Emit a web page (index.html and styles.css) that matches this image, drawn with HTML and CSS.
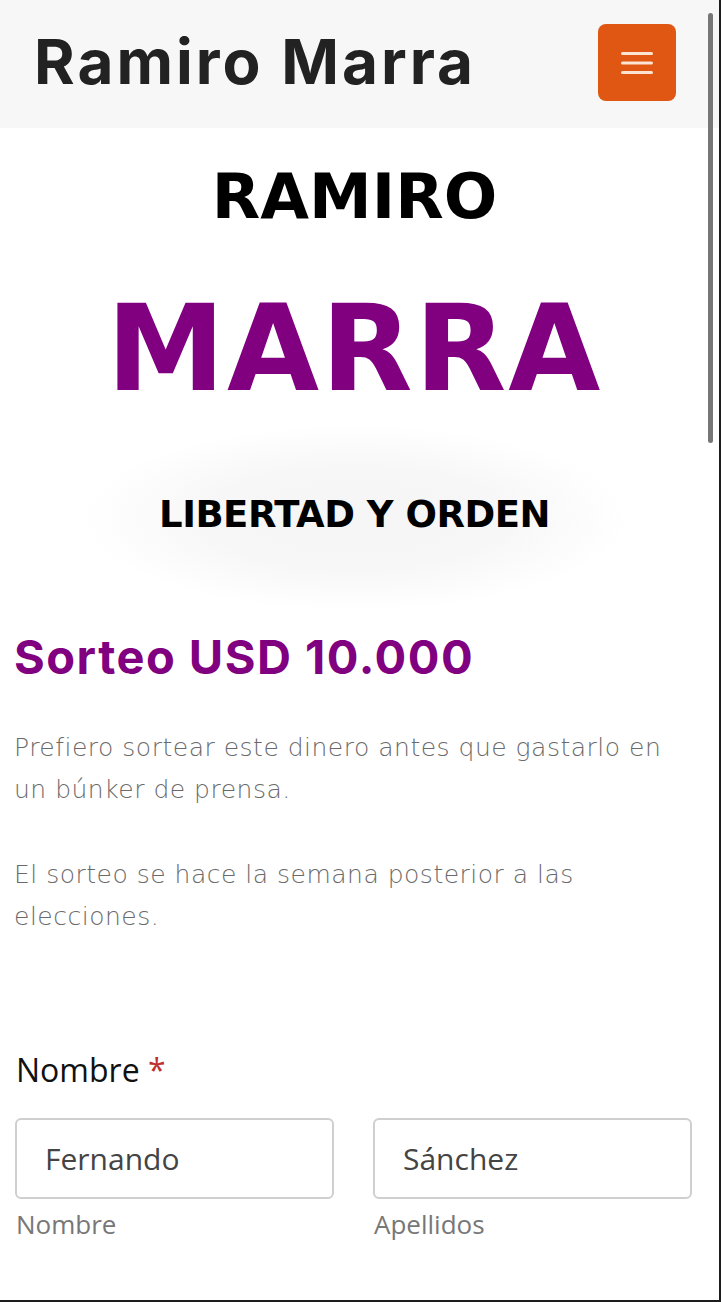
FILE: index.html
```html
<!DOCTYPE html>
<html lang="es">
<head>
<meta charset="utf-8">
<title>Ramiro Marra</title>
<link rel="stylesheet" href="styles.css">
</head>
<body>
<div class="page">
  <header class="site-header">
    <div class="brand">Ramiro Marra</div>
    <button class="menu-btn" aria-label="Menú">
      <svg width="32" height="22" viewBox="0 0 32 22"><rect x="0" y="0" width="32" height="3" rx="1.5" fill="#fbe4d2"/><rect x="0" y="9.5" width="32" height="3" rx="1.5" fill="#fbe4d2"/><rect x="0" y="19" width="32" height="3" rx="1.5" fill="#fbe4d2"/></svg>
    </button>
  </header>

  <section class="hero">
    <h1 class="hero-first">RAMIRO</h1>
    <h1 class="hero-last">MARRA</h1>
    <div class="motto-wrap">
      <h2 class="motto">LIBERTAD Y ORDEN</h2>
    </div>
  </section>

  <main class="content">
    <h2 class="raffle-title">Sorteo USD 10.000</h2>
    <p class="lead">Prefiero sortear este dinero antes que gastarlo en un búnker de prensa.</p>
    <p class="lead">El sorteo se hace la semana posterior a las elecciones.</p>

    <form class="form">
      <div class="field-label">Nombre <span class="req">*</span></div>
      <div class="name-row">
        <div class="name-col">
          <div class="input">Fernando</div>
          <div class="sublabel">Nombre</div>
        </div>
        <div class="name-col">
          <div class="input">Sánchez</div>
          <div class="sublabel">Apellidos</div>
        </div>
      </div>
    </form>
  </main>

  <div class="scrollbar"></div>
</div>
</body>
</html>
```

FILE: styles.css
```css
html, body {
  margin: 0;
  padding: 0;
  background: #ffffff;
}

.page {
  position: relative;
  width: 721px;
  height: 1302px;
  box-sizing: border-box;
  border-right: 2px solid #1c1c1c;
  border-bottom: 2px solid #1c1c1c;
  overflow: hidden;
  font-family: "Inter", "Liberation Sans", sans-serif;
}

.site-header {
  height: 128px;
  background: #f7f7f7;
  display: flex;
  justify-content: space-between;
  align-items: flex-start;
  padding: 0 43px 0 34px;
}

.brand {
  font-family: "Inter", sans-serif;
  font-weight: 700;
  font-size: 62px;
  line-height: 1;
  color: #222222;
  margin-top: 31px;
  letter-spacing: 3px;
}

.menu-btn {
  margin-top: 24px;
  width: 78px;
  height: 77px;
  border: none;
  border-radius: 8px;
  background: #df5713;
  display: flex;
  align-items: center;
  justify-content: center;
  padding: 0;
}

.menu-btn svg {
  display: block;
}

.hero {
  text-align: center;
  padding-right: 10px;
  font-family: "DejaVu Sans", sans-serif;
}

.hero-first {
  margin: 0;
  padding-top: 37px;
  font-weight: 700;
  font-size: 63px;
  line-height: 1;
  color: #000000;
}

.hero-last {
  margin: 0;
  margin-top: 62px;
  font-weight: 700;
  font-size: 119px;
  letter-spacing: 2px;
  line-height: 1;
  color: #800080;
}

.motto-wrap {
  margin: 16px auto 0;
  width: 544px;
  height: 186px;
  box-sizing: border-box;
  padding-bottom: 8px;
  display: flex;
  align-items: center;
  justify-content: center;
  background: radial-gradient(closest-side, #f5f5f5 0%, #f7f7f7 55%, #ffffff 100%);
}

.motto {
  margin: 0;
  font-weight: 700;
  font-size: 37px;
  letter-spacing: -0.5px;
  line-height: 1;
  color: #000000;
}

.content {
  padding: 0 14px;
}

.raffle-title {
  margin: 22px 0 0;
  font-weight: 700;
  font-size: 47px;
  letter-spacing: 1.5px;
  line-height: 1;
  color: #800080;
}

.lead {
  margin: 47px 0 0;
  max-width: 670px;
  font-family: "DejaVu Sans", sans-serif;
  font-weight: 300;
  font-size: 25px;
  letter-spacing: 0.5px;
  line-height: 42px;
  color: #6a6a6a;
}

.lead + .lead {
  margin-top: 43px;
}

.form {
  margin-top: 116px;
  font-family: "Open Sans", "Noto Sans", sans-serif;
}

.field-label {
  font-size: 32px;
  line-height: 1;
  color: #111111;
  padding-left: 2px;
}

.req {
  color: #c0302e;
}

.name-row {
  margin-top: 32px;
  display: flex;
  gap: 39px;
  padding-left: 1px;
}

.name-col {
  width: 319px;
}

.input {
  height: 81px;
  box-sizing: border-box;
  border: 2px solid #cfcfcf;
  border-radius: 6px;
  padding: 0 28px;
  display: flex;
  align-items: center;
  font-size: 30px;
  color: #444444;
}

.sublabel {
  margin-top: 10px;
  font-size: 26px;
  line-height: 1.2;
  color: #777777;
  padding-left: 1px;
}

.scrollbar {
  position: absolute;
  top: 13px;
  left: 708px;
  width: 5px;
  height: 430px;
  border-radius: 3px;
  background: #777777;
}
```
